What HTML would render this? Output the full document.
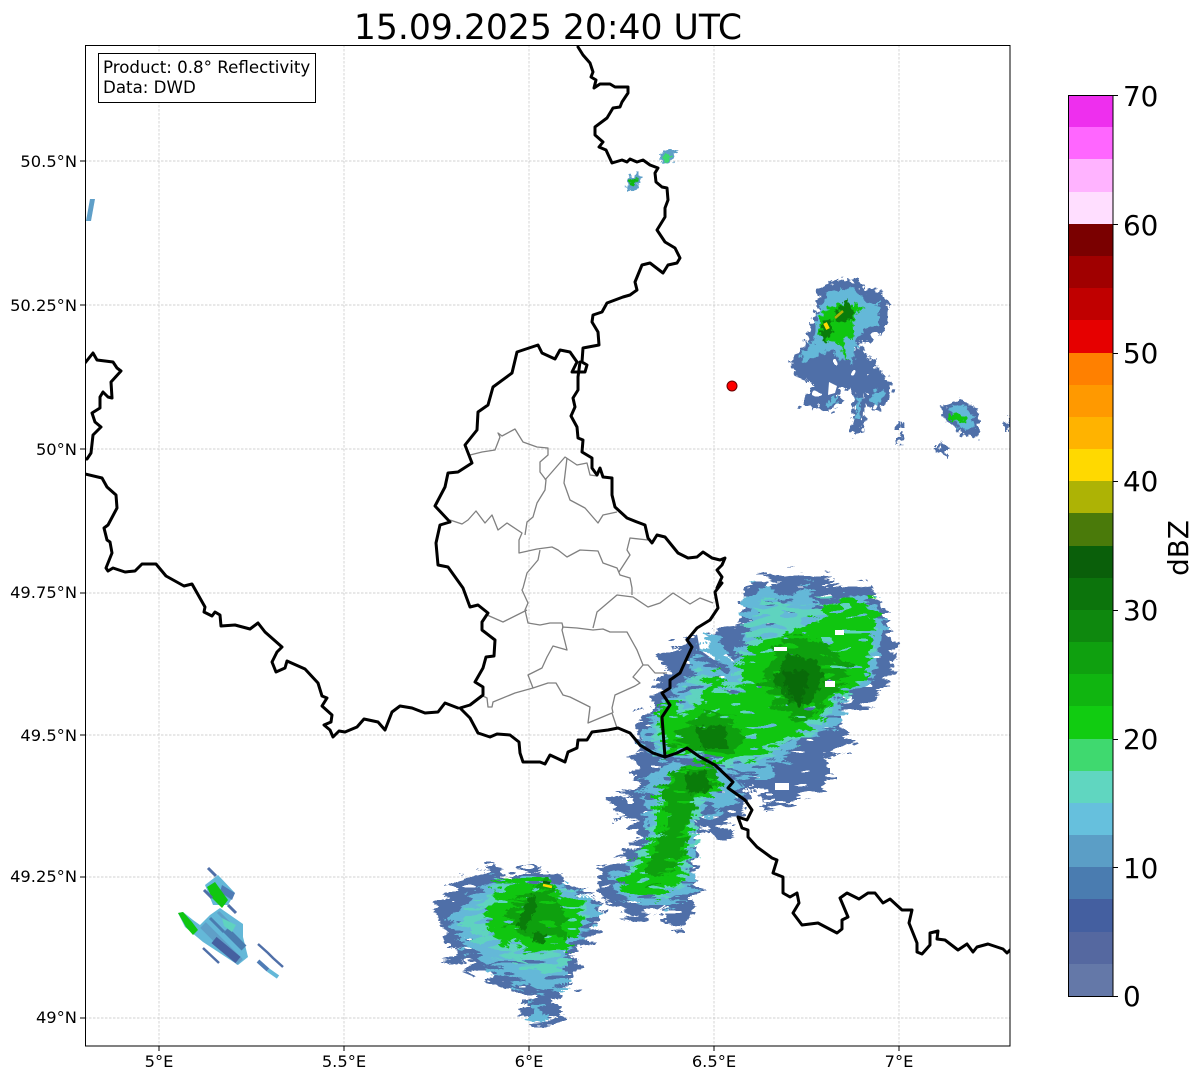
<!DOCTYPE html>
<html><head><meta charset="utf-8"><style>
html,body{margin:0;padding:0;background:#fff}
svg{display:block}
text{font-family:"DejaVu Sans","Liberation Sans",sans-serif;fill:#000}
.g{stroke:#c4c4c4;stroke-width:.7;stroke-dasharray:2.5 1.5;fill:none}
.b{fill:none;stroke:#000;stroke-width:3;stroke-linejoin:round;stroke-linecap:round}
.c{fill:none;stroke:#808080;stroke-width:1.3;stroke-linejoin:round}
.tk{stroke:#000;stroke-width:1}
.xl{font-size:16.3px;text-anchor:middle}
.yl{font-size:16.3px;text-anchor:end}
.cl{font-size:27.8px}
</style></head><body>
<svg width="1202" height="1081" viewBox="0 0 1202 1081" xmlns="http://www.w3.org/2000/svg">
<defs>
<filter id="f1" x="0" y="0" width="1202" height="1081" filterUnits="userSpaceOnUse" color-interpolation-filters="sRGB">
<feTurbulence type="fractalNoise" baseFrequency="0.05 0.17" numOctaves="1" seed="4" result="n"/>
<feComponentTransfer in="n" result="d"><feFuncR type="discrete" tableValues=".5 .5 .5 .1 .3 .5 .7 .9 .5 .5 .5"/><feFuncG type="discrete" tableValues=".5 .5 .5 .1 .3 .5 .7 .9 .5 .5 .5"/><feFuncA type="linear" slope="0" intercept="1"/></feComponentTransfer>
<feDisplacementMap in="SourceGraphic" in2="d" scale="18" xChannelSelector="R" yChannelSelector="G" result="m"/>
<feTurbulence type="fractalNoise" baseFrequency="0.05 0.2" numOctaves="1" seed="11" result="h"/>
<feComponentTransfer in="h" result="ha"><feFuncA type="discrete" tableValues="0 0 0 0 0 0 1 1 1 1 1 1 1 1 1 1 1 1 1 1"/></feComponentTransfer>
<feComposite in="m" in2="ha" operator="in"/>
</filter>
<filter id="f2" x="0" y="0" width="1202" height="1081" filterUnits="userSpaceOnUse" color-interpolation-filters="sRGB">
<feTurbulence type="fractalNoise" baseFrequency="0.05 0.17" numOctaves="1" seed="21" result="n"/>
<feComponentTransfer in="n" result="d"><feFuncR type="discrete" tableValues=".5 .5 .5 .1 .3 .5 .7 .9 .5 .5 .5"/><feFuncG type="discrete" tableValues=".5 .5 .5 .1 .3 .5 .7 .9 .5 .5 .5"/><feFuncA type="linear" slope="0" intercept="1"/></feComponentTransfer>
<feDisplacementMap in="SourceGraphic" in2="d" scale="16" xChannelSelector="R" yChannelSelector="G" result="m"/>
<feTurbulence type="fractalNoise" baseFrequency="0.05 0.2" numOctaves="1" seed="33" result="h"/>
<feComponentTransfer in="h" result="ha"><feFuncA type="discrete" tableValues="0 0 0 0 0 0 0 1 1 1 1 1 1 1 1 1 1 1 1 1"/></feComponentTransfer>
<feComposite in="m" in2="ha" operator="in"/>
</filter>
<filter id="f3" x="0" y="0" width="1202" height="1081" filterUnits="userSpaceOnUse" color-interpolation-filters="sRGB">
<feTurbulence type="fractalNoise" baseFrequency="0.05 0.18" numOctaves="1" seed="41" result="n"/>
<feComponentTransfer in="n" result="d"><feFuncR type="discrete" tableValues=".5 .5 .5 .1 .3 .5 .7 .9 .5 .5 .5"/><feFuncG type="discrete" tableValues=".5 .5 .5 .1 .3 .5 .7 .9 .5 .5 .5"/><feFuncA type="linear" slope="0" intercept="1"/></feComponentTransfer>
<feDisplacementMap in="SourceGraphic" in2="d" scale="16" xChannelSelector="R" yChannelSelector="G" result="m"/>
<feTurbulence type="fractalNoise" baseFrequency="0.05 0.2" numOctaves="1" seed="52" result="h"/>
<feComponentTransfer in="h" result="ha"><feFuncA type="discrete" tableValues="0 0 0 0 0 0 0 0 0 1 1 1 1 1 1 1 1 1 1 1"/></feComponentTransfer>
<feComposite in="m" in2="ha" operator="in"/>
</filter>
<filter id="f4" x="0" y="0" width="1202" height="1081" filterUnits="userSpaceOnUse" color-interpolation-filters="sRGB">
<feTurbulence type="fractalNoise" baseFrequency="0.055 0.18" numOctaves="1" seed="61" result="n"/>
<feComponentTransfer in="n" result="d"><feFuncR type="discrete" tableValues=".5 .5 .5 .1 .3 .5 .7 .9 .5 .5 .5"/><feFuncG type="discrete" tableValues=".5 .5 .5 .1 .3 .5 .7 .9 .5 .5 .5"/><feFuncA type="linear" slope="0" intercept="1"/></feComponentTransfer>
<feDisplacementMap in="SourceGraphic" in2="d" scale="16" xChannelSelector="R" yChannelSelector="G" result="m"/>
<feTurbulence type="fractalNoise" baseFrequency="0.055 0.2" numOctaves="1" seed="72" result="h"/>
<feComponentTransfer in="h" result="ha"><feFuncA type="discrete" tableValues="0 0 0 0 0 0 0 1 1 1 1 1 1 1 1 1 1 1 1 1"/></feComponentTransfer>
<feComposite in="m" in2="ha" operator="in"/>
</filter>
<filter id="k" x="0" y="0" width="1202" height="1081" filterUnits="userSpaceOnUse" color-interpolation-filters="sRGB">
<feTurbulence type="fractalNoise" baseFrequency="0.18" numOctaves="1" seed="7" result="n"/>
<feComponentTransfer in="n" result="d"><feFuncR type="discrete" tableValues=".5 .5 .5 .1 .3 .5 .7 .9 .5 .5 .5"/><feFuncG type="discrete" tableValues=".5 .5 .5 .1 .3 .5 .7 .9 .5 .5 .5"/><feFuncA type="linear" slope="0" intercept="1"/></feComponentTransfer>
<feDisplacementMap in="SourceGraphic" in2="d" scale="9" xChannelSelector="R" yChannelSelector="G" result="m"/>
<feTurbulence type="fractalNoise" baseFrequency="0.1" numOctaves="1" seed="9" result="h"/>
<feComponentTransfer in="h" result="ha"><feFuncA type="discrete" tableValues="0 0 0 0 0 0 1 1 1 1 1 1 1 1 1 1 1 1 1 1"/></feComponentTransfer>
<feComposite in="m" in2="ha" operator="in"/>
</filter>
<filter id="s" x="0" y="0" width="1202" height="1081" filterUnits="userSpaceOnUse" color-interpolation-filters="sRGB">
<feTurbulence type="fractalNoise" baseFrequency="0.22" numOctaves="1" seed="15" result="n"/>
<feComponentTransfer in="n" result="d"><feFuncR type="discrete" tableValues=".5 .5 .5 .1 .3 .5 .7 .9 .5 .5 .5"/><feFuncG type="discrete" tableValues=".5 .5 .5 .1 .3 .5 .7 .9 .5 .5 .5"/><feFuncA type="linear" slope="0" intercept="1"/></feComponentTransfer>
<feDisplacementMap in="SourceGraphic" in2="d" scale="6" xChannelSelector="R" yChannelSelector="G"/>
</filter>
<clipPath id="ax"><rect x="85" y="45" width="925" height="1001"/></clipPath>
</defs>
<rect width="1202" height="1081" fill="#fff"/>
<text x="548" y="39" font-size="34.6" text-anchor="middle">15.09.2025 20:40 UTC</text>
<g clip-path="url(#ax)">
<path class="g" d="M159 45V1046M344 45V1046M529 45V1046M714 45V1046M899 45V1046M85 161H1010M85 305H1010M85 449H1010M85 593H1010M85 735H1010M85 877H1010M85 1018H1010"/>

<!-- blue level -->
<g filter="url(#f1)">
<polygon fill="#4f6fa8" points="750,583 777,575 800,572 827,580 830,588 867,583 883,610 893,630 897,653 890,680 870,703 840,713 853,743 830,753 830,787 797,793 797,803 763,807 760,790 747,780 752,795 745,812 722,826 733,840 715,840 700,825 690,880 700,885 685,930 668,925 665,905 640,920 605,903 597,880 600,868 625,860 640,830 620,818 612,800 640,785 632,760 640,752 635,725 650,705 655,690 672,665 652,660 690,640 710,628 740,625 745,600"/>
<polygon fill="#4f6fa8" points="465,875 490,867 520,873 550,868 577,887 603,905 597,923 585,943 573,947 578,963 575,983 560,993 557,1003 565,1015 550,1025 530,1022 520,1012 527,1000 535,997 495,983 487,975 445,958 458,950 432,910 455,885"/>
</g>
<polygon fill="#fff" points="697,634 706,634 722,650 735,662 714,660 700,650"/>
<!-- light blue level -->
<g filter="url(#f2)">
<polygon fill="#64b8d8" points="707,630 725,645 735,665 712,660 702,645"/>
<polygon fill="#64b8d8" points="743,603 757,587 777,588 778,600 800,590 807,583 813,603 820,613 850,592 877,603 883,627 880,650 870,683 840,700 843,720 833,730 800,737 787,757 773,763 770,777 743,777 730,770 717,760 700,753 663,757 643,747 640,733 657,710 672,690 690,677 693,657 707,663 727,673 740,650 747,623"/>
<polygon fill="#64b8d8" points="610,880 640,860 650,825 640,790 670,760 725,770 745,790 715,815 695,810 692,870 695,890 670,905 640,905 615,895"/>
<polygon fill="#64b8d8" points="490,880 520,878 560,885 602,905 575,940 565,960 565,985 540,995 500,975 465,950 450,925 470,895"/>
<polygon fill="#64b8d8" points="531,1005 543,1003 542,1022 531,1020"/>
</g>
<!-- teal level -->
<g filter="url(#f3)">
<polygon fill="#5fd3bf" points="748,625 762,600 800,605 850,600 875,615 875,650 860,685 835,695 825,725 790,745 760,760 720,762 690,755 660,755 650,735 665,712 680,695 698,670 725,685 742,660"/>
<polygon fill="#5fd3bf" points="495,885 530,880 590,905 572,935 560,975 520,965 480,945 462,920"/>
<polygon fill="#5fd3bf" points="625,875 650,835 655,800 690,775 705,800 690,870 680,890 640,895"/>
</g>
<!-- bright green level -->
<g filter="url(#f4)">
<polygon fill="#10c610" points="740,663 760,640 787,637 813,623 843,597 863,597 880,617 870,647 863,683 833,693 830,710 800,733 773,747 753,757 733,760 717,757 697,750 667,753 657,727 667,717 700,707 707,683 717,673 727,693 743,687"/>
<polygon fill="#10c610" points="657,793 677,767 713,760 723,790 693,800 688,837 682,880 657,897 630,897 617,880 640,862 657,830"/>
<polygon fill="#10c610" points="490,887 527,878 547,878 560,895 585,905 575,943 567,950 547,950 527,953 500,940 480,917 500,897"/>
<polygon fill="#10c610" points="660,700 675,700 680,745 660,745"/>
</g>
<!-- mid green level -->
<g filter="url(#f2)">
<polygon fill="#0ea00e" points="762,683 778,645 800,632 830,650 852,670 836,690 815,716 790,720 775,700"/>
<polygon fill="#0ea00e" points="668,742 697,716 730,718 748,740 723,753 697,750"/>
<polygon fill="#0ea00e" points="665,785 680,770 712,765 718,785 695,795 688,830 678,868 648,882 648,860 665,825"/>
<polygon fill="#0ea00e" points="530,893 547,880 552,893 567,913 563,937 533,940 503,920 517,903"/>
</g>
<!-- dark green level -->
<g filter="url(#s)">
<polygon fill="#0a7c0a" points="772,680 788,655 815,660 825,675 810,705 790,702"/>
<polygon fill="#0a7c0a" points="695,728 725,725 728,748 703,748"/>
<polygon fill="#0a7c0a" points="683,775 705,770 712,790 690,795"/>
<polygon fill="#0a7c0a" points="533,893 537,905 525,932 517,925 527,900"/>
<polygon fill="#0a7c0a" points="533,932 548,935 545,942 533,940"/>
<polygon fill="#096a09" points="783,672 806,670 808,682 800,708 792,698 786,686"/>
</g>
<!-- white gaps -->
<g fill="#fff"><rect x="774" y="647" width="13" height="4"/><rect x="835" y="630" width="9" height="5"/><rect x="825" y="681" width="10" height="6"/><rect x="775" y="783" width="14" height="7"/></g>

<g filter="url(#k)">
<polygon fill="#4f6fa8" points="818,288 830,283 848,278 860,283 863,293 877,288 888,303 887,327 870,342 858,342 870,358 883,373 893,387 887,407 870,410 865,402 863,393 865,413 860,433 850,435 855,400 853,390 838,387 842,402 827,413 815,407 800,405 813,383 797,377 788,360 805,348 807,335 817,310"/>
<polygon fill="#4f6fa8" points="896,420 901,420 903,428 897,428"/>
<polygon fill="#4f6fa8" points="896,435 903,434 901,443 896,444"/>
<polygon fill="#4f6fa8" points="937,445 942,443 948,449 948,457 938,452"/>
<polygon fill="#4f6fa8" points="1005,422 1010,417 1011,432 1005,432"/>
</g>
<polygon fill="#fff" points="829,382 837,386 835,393 828,395"/>
<g filter="url(#s)">
<polygon fill="#64b8d8" points="827,293 853,287 867,303 880,303 880,323 860,333 852,363 830,350 803,363 800,355 813,343 817,320"/>
<polygon fill="#64b8d8" points="875,390 885,392 878,405 868,402"/>
<polygon fill="#64b8d8" points="857,395 862,397 860,420 855,420"/>
<polygon fill="#64b8d8" points="825,402 838,396 835,405 828,408"/>
<polygon fill="#4f6fa8" points="942,407 960,400 977,407 980,422 977,438 960,435 957,427 945,422"/>
<polygon fill="#10c610" points="823,310 840,303 858,305 863,308 853,320 855,337 843,338 848,363 837,343 827,342 818,333 820,320"/>
<polygon fill="#64b8d8" points="830,345 838,343 845,360 840,362"/>
<polygon fill="#0a7c0a" points="838,308 848,300 855,313 847,323 833,320"/>
<polygon fill="#0a7c0a" points="820,325 830,318 833,330 823,342"/>
<polygon fill="#64b8d8" points="948,408 965,405 974,420 973,430 960,428"/>
<polygon fill="#10c610" points="950,412 968,417 963,423 948,418"/>
<polygon fill="#5f9fc8" points="627,180 638,172 642,178 635,190 628,192"/>
<polygon fill="#10b810" points="630,181 636,177 637,184 632,187"/>
<polygon fill="#5f9fc8" points="658,155 668,150 676,150 672,163 662,165"/>
<polygon fill="#3cd96e" points="662,157 670,153 670,162 664,163"/>
</g>
<polygon fill="#5f9fc8" points="86,221 90,199 95,199 91,221"/>
<path d="M825 323l3 6" stroke="#ffd900" stroke-width="4" fill="none"/>
<path d="M835 318l8-7" stroke="#adb305" stroke-width="2.5" fill="none"/>
<path d="M543 885l9 2" stroke="#ffd900" stroke-width="2.5" fill="none"/>
<path d="M543 882l7 1" stroke="#0a5f0a" stroke-width="2.5" fill="none"/>
<!-- SW angled cell -->
<polygon fill="#64b8d8" points="218,875 235,893 228,905 213,905 205,885"/>
<polygon fill="#4f7cb5" points="222,885 235,893 232,900 220,892"/>
<polygon fill="#10c610" points="207,887 215,882 228,900 222,908 212,898"/>
<path d="M208 868l8 8M204 890l8 8M228 905l8 8" stroke="#4f6fa8" stroke-width="3" fill="none"/>
<polygon fill="#64b8d8" points="220,908 243,924 243,937 248,957 238,965 203,942 185,927 178,913 183,912 193,920 200,925 210,915"/>
<g fill="none">
<path d="M203 925L240 962" stroke="#5f9fc8" stroke-width="8"/>
<path d="M214 940l24 20" stroke="#4560a0" stroke-width="8"/>
<path d="M226 930l18 18" stroke="#4a7cb0" stroke-width="7"/>
<path d="M210 918l14 14" stroke="#4a7cb0" stroke-width="3"/>
<path d="M218 912l14 14" stroke="#5f9fc8" stroke-width="3"/>
<path d="M203 948l16 15" stroke="#4f6fa8" stroke-width="2.500"/>
<path d="M258 944l10 9 5 5 10 9" stroke="#4f6fa8" stroke-width="2.500"/>
<path d="M258 961l10 9" stroke="#4f7cb5" stroke-width="4"/>
<path d="M268 970l10 7" stroke="#64b8d8" stroke-width="4"/>
</g>
<polygon fill="#5fd3bf" points="222,918 236,925 232,932 224,926"/>
<polygon fill="#10c610" points="178,913 183,912 192,922 198,930 193,935 186,927"/>
<!-- Borders -->
<path class="c" d="M470 455L482 452 495 450 500 437 498 433 502 436 515 429 523 442 537 447 548 448 548 455 540 462 540 472 546 480 545 490 537 503 533 517 527 522 525 535"/>
<path class="c" d="M450 520L462 524 468 520 476 511 485 523 492 515 498 530 507 523 522 533 519 540 519 553 537 549 552 547 558 550 567 557 580 550 598 551 603 563 617 568 620 575 630 578 632 588 632 595"/>
<path class="c" d="M545 480L565 457 577 465 587 463 590 475 597 476"/>
<path class="c" d="M567 458L564 483 570 500 585 508 598 523 603 515 617 512"/>
<path class="c" d="M648 540L630 538 627 550 630 555 619 572"/>
<path class="c" d="M540 550L538 560 527 573 523 588 522 590 528 603 525 610 528 623 540 625 550 623 562 623 563 627 562 630 567 650 553 646 547 657 542 668 528 675 533 688 515 693 493 702 492 707 488 707 487 698 483 696"/>
<path class="c" d="M487 615L503 622 527 610"/>
<path class="c" d="M533 688L548 683 556 683 563 695 570 697 590 707 588 723 612 713 617 728"/>
<path class="c" d="M562 627L577 628 593 630 603 629 610 632 627 632 637 650 643 665 633 677 640 683 635 686 615 695 612 708 613 713"/>
<path class="c" d="M643 665L648 665 655 673 667 673"/>
<path class="c" d="M593 628L597 612 617 595 633 597 648 607 660 603 673 593 690 604 700 598 713 603"/>

<path class="b" d="M578 47L583 55 590 63 593 72 591 77 596 80 594 88 600 84 610 84 615 87 628 87 628 93 622 102 620 107 613 108 607 118 595 127 595 135 603 142 599 147 606 150 612 163 622 160 627 162 630 159 637 162 643 160 650 165 658 168 655 173 656 182 662 187 667 188 668 200 665 208 665 217 657 230 665 242 675 248 680 258 677 263 668 265 663 273 650 263 642 265 635 282 637 290 630 295 623 297 607 303 602 312 593 315 592 322 598 332 599 345 583 348 582 362 587 365 585 372 572 372 577 362 570 352 560 350 555 359 542 353 538 345 517 352 512 373 493 387 488 405 478 412 477 430 465 445 472 463 458 472 448 473 445 487 435 506 450 522 440 525 436 543 438 565 448 567 463 588 470 607 478 605 488 613 482 622 482 630 495 640 494 656 486 657 483 668 475 682 483 687 483 695 470 705 460 708 470 718 478 733 490 737 497 734 510 735 519 742 520 753 523 762 540 762 545 764 550 755 565 762 568 752 577 748 578 740 587 740 592 732 608 730 618 728 630 733 640 745 653 753 665 757 677 753 687 748 700 757 715 765 733 782 728 788 745 800 752 810 747 820 738 817 742 828 748 830 748 837 757 847 772 858 777 860 773 873 783 877 783 893 790 897 797 893 799 903 793 913 802 925 818 923 837 933 842 929 842 920 848 917 840 898 847 893 859 899 868 893 875 893 883 903 890 899 902 910 912 910 909 923 917 943 917 952 922 954 930 945 930 933 938 931 937 939 945 940 958 950 967 944 973 952 977 947 988 944 1003 949 1007 953 1010 950"/>
<path class="b" d="M580 362L578 377 578 390 573 398 575 407 571 416 577 427 578 438 583 440 582 452 592 458 592 468 597 475 600 468 603 477 612 478 612 495 615 507 627 518 637 522 645 525 648 538 652 543 657 535 665 537 678 553 688 558 697 557 703 552 712 558 720 560 725 558 722 565 717 570 722 577 717 588 722 583 715 592 718 608 710 620 697 628 687 640 692 647 680 673 670 680 670 688 662 693 670 705 662 717 665 757"/>
<path class="b" d="M85 363L93 353 97 360 113 362 117 368 121 371 111 382 112 398 108 397 103 392 100 397 100 408 92 413 95 422 101 427 93 435 91 453 87 459 85 459"/>
<path class="b" d="M85 474L102 478 107 487 116 495 117 508 108 525 104 528 107 540 110 542 112 553 106 568 108 571 113 568 125 572 135 571 142 564 156 564 166 576 184 586 192 584 205 607 204 612 212 616 215 612 220 615 221 626 235 625 250 629 258 623 265 632 282 647 277 652 272 662 276 672 285 668 287 661 305 669 318 683 322 696 327 698 322 706 332 715 331 722 324 725 330 730 333 737 339 731 345 732 357 727 364 719 378 722 385 730 392 712 400 706 412 708 425 713 438 712 445 703 458 708"/>
<circle cx="732" cy="386" r="5" fill="#f00" stroke="#600" stroke-width="1"/>
</g>
<rect x="98.500" y="53.500" width="217" height="49" fill="#fff" stroke="#000" stroke-width="1"/>
<text x="103" y="73" font-size="16.67">Product: 0.8° Reflectivity</text>
<text x="103" y="93" font-size="16.67">Data: DWD</text>
<rect x="85.500" y="45.500" width="924.500" height="1000.500" fill="none" stroke="#000" stroke-width="1"/>
<path class="tk" d="M159 1046v5M344 1046v5M529 1046v5M714 1046v5M899 1046v5M85 161h-5M85 305h-5M85 449h-5M85 593h-5M85 735h-5M85 877h-5M85 1018h-5"/>
<text class="xl" x="159" y="1067">5°E</text><text class="xl" x="344" y="1067">5.5°E</text><text class="xl" x="529" y="1067">6°E</text><text class="xl" x="714" y="1067">6.5°E</text><text class="xl" x="899" y="1067">7°E</text>
<text class="yl" x="77" y="167">50.5°N</text><text class="yl" x="77" y="311">50.25°N</text><text class="yl" x="77" y="455">50°N</text><text class="yl" x="77" y="598">49.75°N</text><text class="yl" x="77" y="741">49.5°N</text><text class="yl" x="77" y="882">49.25°N</text><text class="yl" x="77" y="1023">49°N</text>

<!-- Colorbar -->
<g shape-rendering="crispEdges">
<rect x="1068" y="95" width="45" height="33" fill="#ee2fee"/>
<rect x="1068" y="127" width="45" height="33" fill="#ff66ff"/>
<rect x="1068" y="159" width="45" height="33" fill="#ffb3ff"/>
<rect x="1068" y="192" width="45" height="33" fill="#ffdeff"/>
<rect x="1068" y="224" width="45" height="33" fill="#7a0000"/>
<rect x="1068" y="256" width="45" height="33" fill="#a00000"/>
<rect x="1068" y="288" width="45" height="33" fill="#c00000"/>
<rect x="1068" y="320" width="45" height="33" fill="#e60000"/>
<rect x="1068" y="353" width="45" height="33" fill="#ff8000"/>
<rect x="1068" y="385" width="45" height="33" fill="#ff9900"/>
<rect x="1068" y="417" width="45" height="33" fill="#ffb300"/>
<rect x="1068" y="449" width="45" height="33" fill="#ffd900"/>
<rect x="1068" y="481" width="45" height="33" fill="#adb305"/>
<rect x="1068" y="513" width="45" height="33" fill="#4a7a0a"/>
<rect x="1068" y="546" width="45" height="33" fill="#0a5f0a"/>
<rect x="1068" y="578" width="45" height="33" fill="#0c740c"/>
<rect x="1068" y="610" width="45" height="33" fill="#0e880e"/>
<rect x="1068" y="642" width="45" height="33" fill="#0fa00f"/>
<rect x="1068" y="674" width="45" height="33" fill="#10b510"/>
<rect x="1068" y="706" width="45" height="33" fill="#11cc11"/>
<rect x="1068" y="739" width="45" height="33" fill="#3fd96f"/>
<rect x="1068" y="771" width="45" height="33" fill="#60d6c0"/>
<rect x="1068" y="803" width="45" height="33" fill="#66c0dd"/>
<rect x="1068" y="835" width="45" height="33" fill="#5b9ec6"/>
<rect x="1068" y="867" width="45" height="33" fill="#4a7cb0"/>
<rect x="1068" y="899" width="45" height="33" fill="#445fa0"/>
<rect x="1068" y="932" width="45" height="33" fill="#5568a0"/>
<rect x="1068" y="964" width="45" height="32" fill="#6478a8"/>
</g>
<rect x="1068.500" y="95.500" width="44.500" height="901" fill="none" stroke="#000" stroke-width="1"/>
<path class="tk" d="M1113 95.500h5M1113 224.500h5M1113 353.500h5M1113 481.500h5M1113 610.500h5M1113 739.500h5M1113 867.500h5M1113 996.500h5"/>
<text class="cl" x="1123" y="106">70</text><text class="cl" x="1123" y="235">60</text><text class="cl" x="1123" y="363">50</text><text class="cl" x="1123" y="491">40</text><text class="cl" x="1123" y="620">30</text><text class="cl" x="1123" y="749">20</text><text class="cl" x="1123" y="878">10</text><text class="cl" x="1123" y="1006">0</text>
<text class="cl" transform="translate(1188 548) rotate(-90)" text-anchor="middle">dBZ</text>
</svg>
</body></html>
